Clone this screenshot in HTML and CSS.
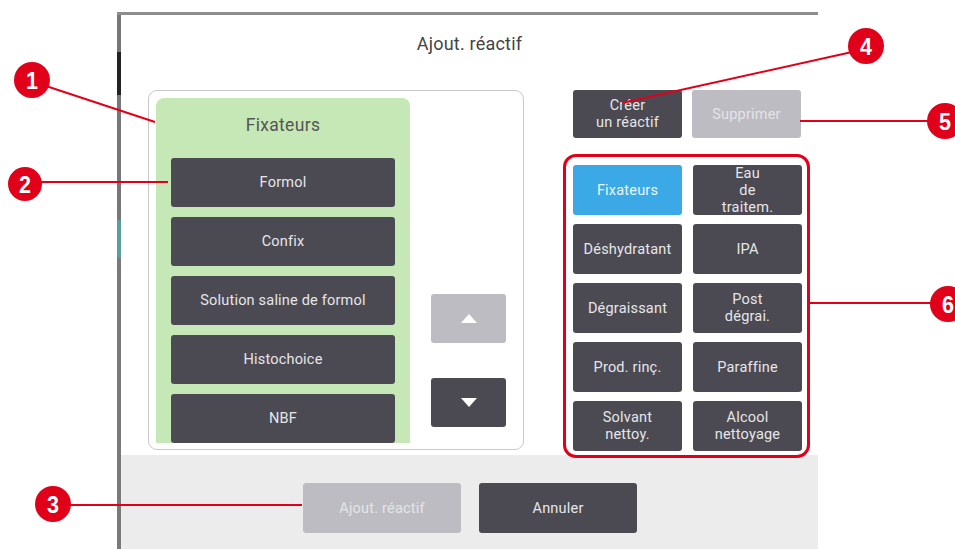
FILE: index.html
```html
<!DOCTYPE html>
<html>
  <head>
    <title>Ajout. réactif</title>
    <meta name="viewport" content="width=device-width, initial-scale=1.0">
    <link rel="stylesheet" href="styles.css">
  </head>
  <body>
    <div class="screen">
      <div class="edge"></div>
      <div class="dialog">
        <h1 class="title">Ajout. réactif</h1>

        <div class="main">
          <div class="list-box">
            <div class="group">
              <h2>Fixateurs</h2>
              <div class="items">
                <button class="btn">Formol</button>
                <button class="btn">Confix</button>
                <button class="btn">Solution saline de formol</button>
                <button class="btn">Histochoice</button>
                <button class="btn">NBF</button>
              </div>
            </div>
            <div class="scroll">
              <button class="btn arrow off">
                <svg width="16" height="9" viewBox="0 0 16 9"><polygon points="8,0 16,9 0,9" fill="#fff"/></svg>
              </button>
              <button class="btn arrow">
                <svg width="16" height="9" viewBox="0 0 16 9"><polygon points="0,0 16,0 8,9" fill="#fff"/></svg>
              </button>
            </div>
          </div>

          <div class="side">
            <div class="actions">
              <button class="btn small">Créer<br>un réactif</button>
              <button class="btn small off">Supprimer</button>
            </div>
            <div class="groups">
              <button class="btn cell active">Fixateurs</button>
              <button class="btn cell">Eau<br>de<br>traitem.</button>
              <button class="btn cell">Déshydratant</button>
              <button class="btn cell">IPA</button>
              <button class="btn cell">Dégraissant</button>
              <button class="btn cell">Post<br>dégrai.</button>
              <button class="btn cell">Prod. rinç.</button>
              <button class="btn cell">Paraffine</button>
              <button class="btn cell">Solvant<br>nettoy.</button>
              <button class="btn cell">Alcool<br>nettoyage</button>
            </div>
          </div>
        </div>

        <div class="footer">
          <button class="btn wide off">Ajout. réactif</button>
          <button class="btn wide">Annuler</button>
        </div>
      </div>
    </div>

    <!-- callouts -->
    <svg class="callouts" width="955" height="549" viewBox="0 0 955 549">
      <g stroke="#e1001a" stroke-width="2">
        <line x1="46" y1="86" x2="155" y2="122"/>
        <line x1="40" y1="182" x2="168" y2="182"/>
        <line x1="70" y1="505" x2="302" y2="505"/>
        <line x1="852" y1="52" x2="622" y2="103"/>
        <line x1="800" y1="121" x2="930" y2="121"/>
        <line x1="810" y1="303" x2="932" y2="303"/>
      </g>
      <g fill="#e1001a">
        <circle cx="32" cy="80" r="18"/>
        <circle cx="25" cy="184" r="17"/>
        <circle cx="53" cy="504" r="18"/>
        <circle cx="866" cy="46" r="18"/>
        <circle cx="945" cy="121" r="18"/>
        <circle cx="948" cy="304" r="18"/>
      </g>
      <g class="num" fill="#fff" text-anchor="middle">
        <text x="32" y="89" textLength="12" lengthAdjust="spacingAndGlyphs">1</text>
        <text x="25" y="193" textLength="12" lengthAdjust="spacingAndGlyphs">2</text>
        <text x="53" y="513" textLength="12" lengthAdjust="spacingAndGlyphs">3</text>
        <text x="866" y="55" textLength="12" lengthAdjust="spacingAndGlyphs">4</text>
        <text x="945" y="130" textLength="12" lengthAdjust="spacingAndGlyphs">5</text>
        <text x="948" y="313" textLength="12" lengthAdjust="spacingAndGlyphs">6</text>
      </g>
    </svg>
  </body>
</html>
```

FILE: styles.css
```css
/* CSS styles */
body {
  margin: 0;
  background-color: #fff;
  font-family: Roboto, "Liberation Sans", sans-serif;
  width: 955px;
  height: 549px;
  overflow: hidden;
  position: relative;
}

.screen {
  display: flex;
  margin: 12px 0 0 117px;
  width: 701px;
  height: 537px;
  border-top: 3px solid #8d8d8d;
}

.edge {
  width: 4px;
  background: linear-gradient(to bottom,
    #767676 0, #767676 37px,
    #222 37px, #222 80px,
    #777 80px, #777 205px,
    #5a9d9c 205px, #5a9d9c 243px,
    #7a7a7a 243px);
}

.dialog {
  flex: 1;
  display: flex;
  flex-direction: column;
  background-color: #fff;
}

.title {
  margin: 0;
  height: 75px;
  padding-top: 18px;
  box-sizing: border-box;
  text-align: center;
  font-size: 18px;
  font-weight: normal;
  color: #444;
  letter-spacing: 0.2px;
}

.btn {
  font-family: inherit;
  border: none;
  border-radius: 3px;
  background-color: #4b4a53;
  color: #e6e6e8;
  font-size: 14.5px;
  line-height: 17px;
  letter-spacing: 0.2px;
  padding: 0;
  cursor: pointer;
}

.btn.off {
  background-color: #bdbcc2;
  color: #e4e4e8;
}

.main {
  display: flex;
  height: 365px;
  padding-left: 27px;
}

.list-box {
  display: flex;
  width: 376px;
  height: 360px;
  box-sizing: border-box;
  border: 1.5px solid #c9c9c9;
  border-radius: 9px;
  padding: 7px 0 6px 7px;
}

.group {
  width: 254px;
  background-color: #c6e8b6;
  border-radius: 8px 8px 0 0;
  overflow: hidden;
}

.group h2 {
  margin: 0;
  height: 60px;
  line-height: 55px;
  text-align: center;
  font-size: 17.5px;
  font-weight: normal;
  letter-spacing: 0.3px;
  color: #555;
}

.items {
  display: flex;
  flex-direction: column;
  gap: 10px;
  padding: 0 15px;
}

.items .btn {
  height: 49px;
}

.scroll {
  display: flex;
  flex-direction: column;
  justify-content: flex-end;
  gap: 35px;
  margin-left: 21px;
  padding-bottom: 16px;
}

.arrow {
  width: 75px;
  height: 49px;
  display: flex;
  align-items: center;
  justify-content: center;
}

.side {
  margin-left: 39px;
  width: 247px;
}

.actions {
  display: flex;
  gap: 10px;
  padding-left: 10px;
  margin-bottom: 16px;
}

.small {
  width: 109px;
  height: 48px;
}

.groups {
  display: grid;
  grid-template-columns: 109px 109px;
  grid-auto-rows: 50px;
  column-gap: 11px;
  row-gap: 9px;
  padding: 8px 7px 4px;
  border: 3px solid #e1001a;
  border-radius: 13px;
  background-color: #fff;
  position: relative;
  z-index: 1;
}

.cell.active {
  background-color: #3ba9e5;
  color: #eaf6ff;
}

.footer {
  flex: 1;
  background-color: #ececec;
  display: flex;
  gap: 18px;
  padding: 28px 0 0 182px;
}

.wide {
  width: 158px;
  height: 50px;
}

.callouts {
  position: absolute;
  left: 0;
  top: 0;
  pointer-events: none;
  z-index: 2;
}

.num {
  font-family: "Liberation Sans", sans-serif;
  font-weight: 700;
  font-size: 24px;
}
```
